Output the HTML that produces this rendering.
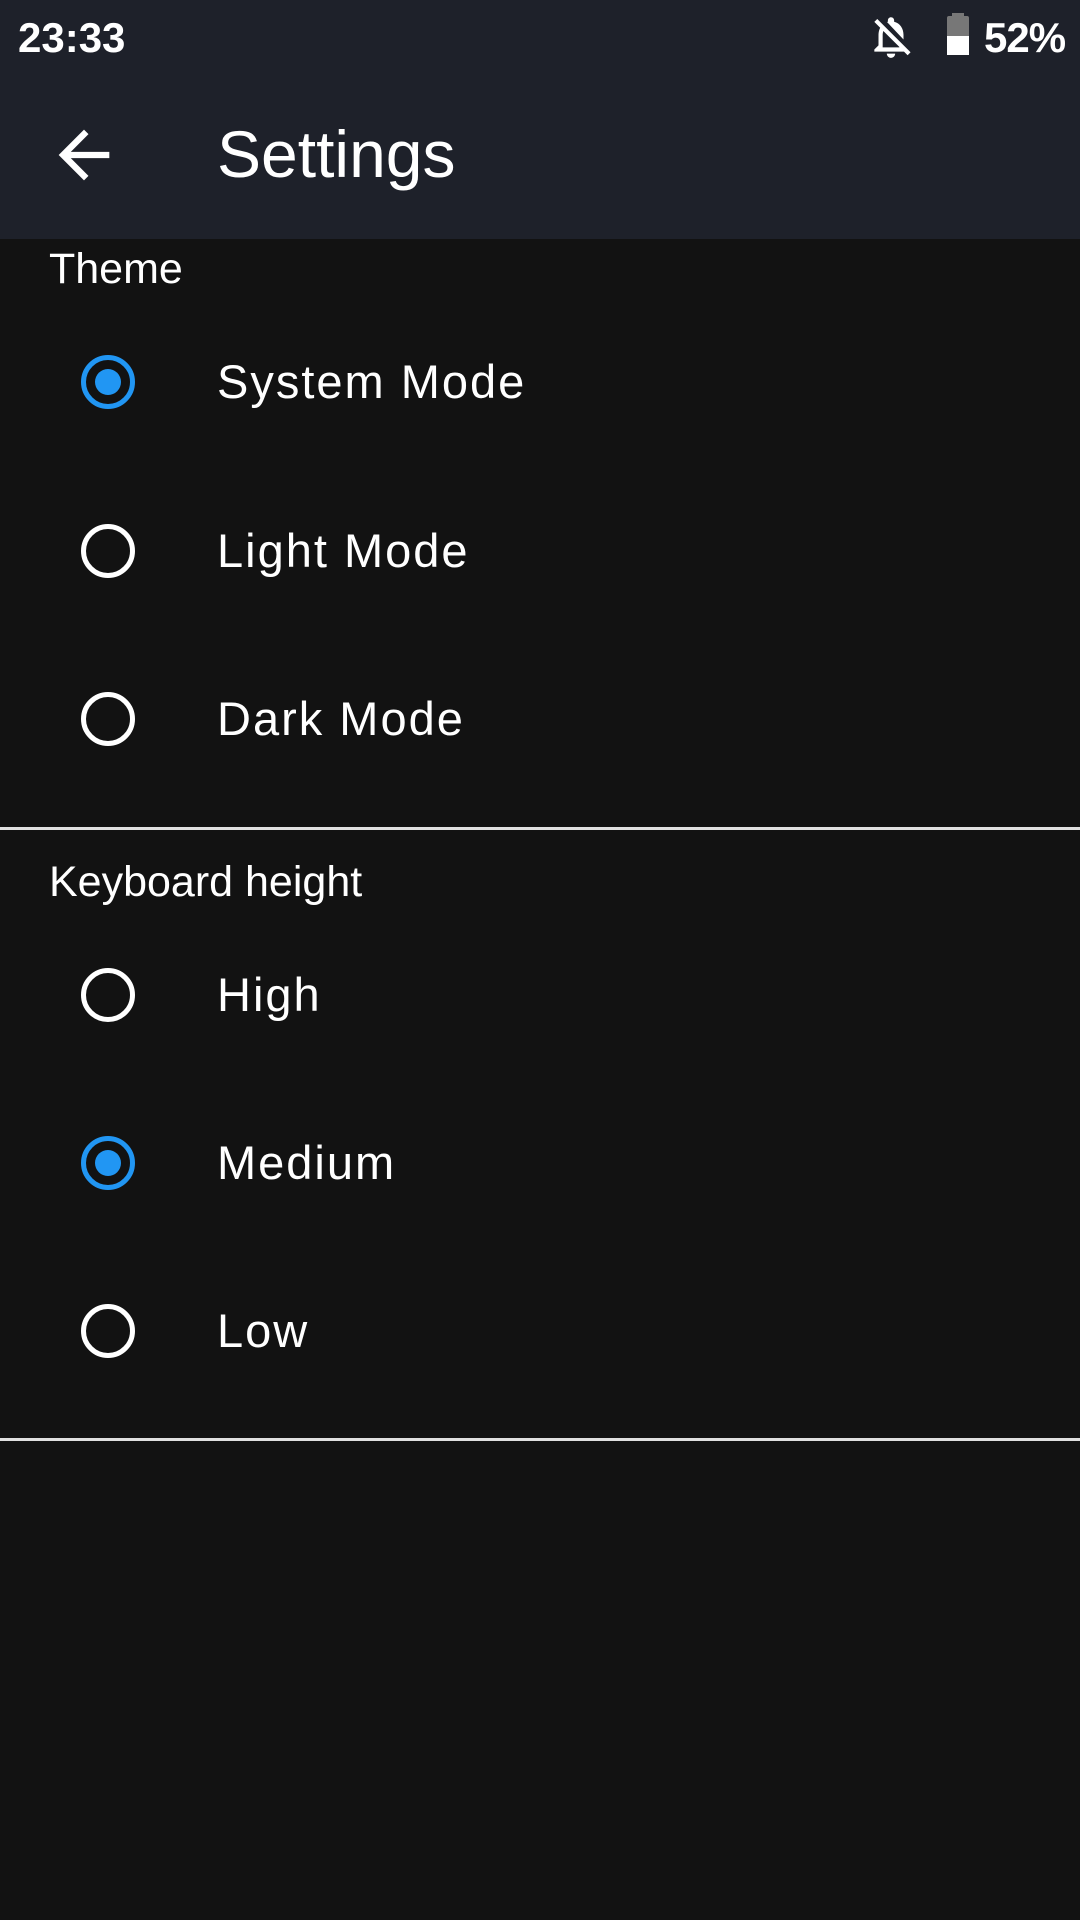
<!DOCTYPE html>
<html><head><meta charset="utf-8"><style>
html,body{margin:0;padding:0;}
body{width:1080px;height:1920px;background:#121212;position:relative;overflow:hidden;font-family:"Liberation Sans",sans-serif;color:#fff;}
.hdr{position:absolute;left:0;top:0;width:1080px;height:239px;background:#1e212a;}
.abs{position:absolute;}
.lbl{position:absolute;left:49px;font-size:43px;line-height:50px;}
.opt{position:absolute;left:217px;font-size:47px;letter-spacing:2px;line-height:60px;}
.rad{position:absolute;left:81px;width:54px;height:54px;border:5px solid #fff;border-radius:50%;box-sizing:border-box;}
.rad.on{border-color:#2196f3;}
.rad.on::after{content:"";position:absolute;left:9px;top:9px;width:26px;height:26px;border-radius:50%;background:#2196f3;}
.div{position:absolute;left:0;width:1080px;height:3px;background:#e0e0e0;}
</style></head><body>
<div class="hdr"></div>
<div class="abs" style="left:18px;top:14px;font-size:42px;font-weight:bold;line-height:48px;">23:33</div>
<svg class="abs" style="left:866px;top:12px" width="50" height="50" viewBox="0 0 24 24"><path d="M12 22c1.1 0 2-.9 2-2h-4c0 1.1.9 2 2 2zm6-6v-5c0-3.07-1.64-5.640-4.5-6.32V4c0-.83-.67-1.5-1.5-1.5s-1.5.67-1.5 1.5v.68c-.15.03-.29.08-.42.12L18 13.2V16zM5.41 3.35 4 4.760l2.81 2.81C6.29 8.57 6 9.73 6 11v5l-2 2v1h14.24l1.74 1.74 1.41-1.41L5.41 3.35zM16 17H8v-6c0-.68.12-1.32.34-1.9L16 16.76V17z" fill="#fff"/></svg>
<div class="abs" style="left:947px;top:16px;width:22px;height:39px;background:#777;border-radius:2px;"></div>
<div class="abs" style="left:952px;top:13px;width:12px;height:4px;background:#777;"></div>
<div class="abs" style="left:947px;top:36px;width:22px;height:19px;background:#fff;"></div>
<div class="abs" style="left:984px;top:14px;font-size:42px;font-weight:bold;line-height:48px;letter-spacing:-1px;">52%</div>
<svg class="abs" style="left:46px;top:117px" width="76" height="76" viewBox="0 0 24 24"><path d="M20 11H7.83l5.59-5.59L12 4l-8 8 8 8 1.41-1.41L7.83 13H20v-2z" fill="#fff"/></svg>
<div class="abs" style="left:217px;top:116px;font-size:66px;line-height:76px;">Settings</div>
<div class="lbl" style="top:244px">Theme</div>
<div class="rad on" style="top:355px"></div><div class="opt" style="top:352px">System Mode</div>
<div class="rad" style="top:524px"></div><div class="opt" style="top:521px">Light Mode</div>
<div class="rad" style="top:692px"></div><div class="opt" style="top:689px">Dark Mode</div>
<div class="div" style="top:827px"></div>
<div class="lbl" style="top:857px">Keyboard height</div>
<div class="rad" style="top:968px"></div><div class="opt" style="top:965px">High</div>
<div class="rad on" style="top:1136px"></div><div class="opt" style="top:1133px">Medium</div>
<div class="rad" style="top:1304px"></div><div class="opt" style="top:1301px">Low</div>
<div class="div" style="top:1438px"></div>
</body></html>
